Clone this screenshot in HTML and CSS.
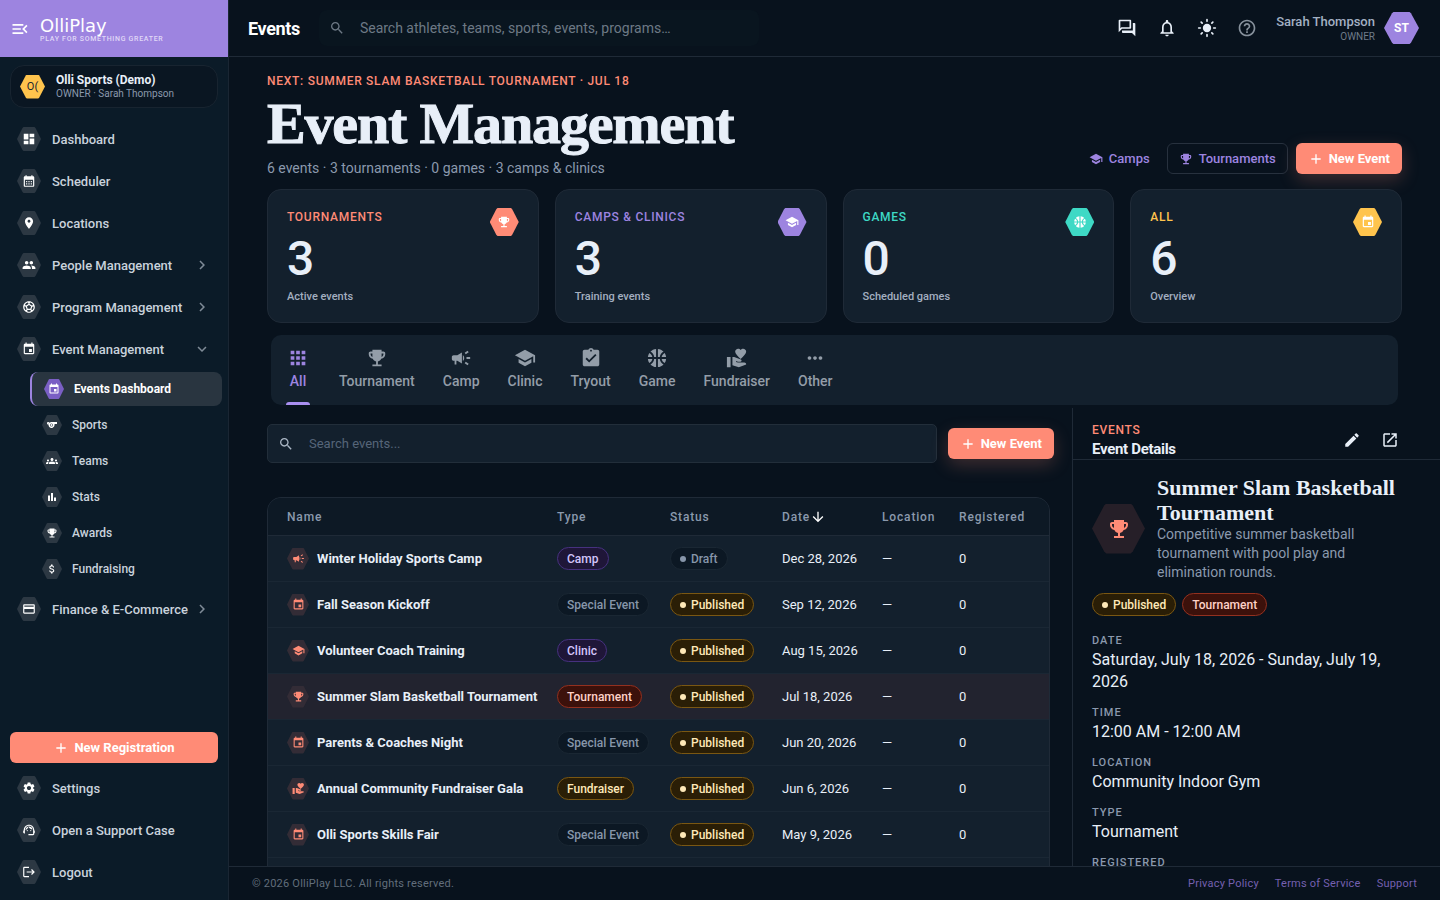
FILE: index.html
```html
<!DOCTYPE html>
<html lang="en">
<head>
  <meta charset="UTF-8" />
  <meta name="viewport" content="width=device-width, initial-scale=1.0"/>
  <title>Events - OlliPlay</title>
  <link rel="stylesheet" href="styles.css">
</head>
<body>
  <!-- Icon sprite -->
  <svg class="sprite" aria-hidden="true">
    <symbol id="menu-open" viewBox="0 0 24 24"><path d="M3 18h13v-2H3v2zm0-5h10v-2H3v2zm0-7v2h13V6H3zm18 9.59L17.42 12 21 8.41 19.59 7l-5 5 5 5L21 15.59z"/></symbol>
    <symbol id="dashboard" viewBox="0 0 24 24"><path d="M3 13h8V3H3v10zm0 8h8v-6H3v6zm10 0h8V11h-8v10zm0-18v6h8V3h-8z"/></symbol>
    <symbol id="calendar" viewBox="0 0 24 24"><path d="M19 4h-1V2h-2v2H8V2H6v2H5c-1.11 0-1.99.9-1.99 2L3 20c0 1.1.89 2 2 2h14c1.1 0 2-.9 2-2V6c0-1.1-.9-2-2-2zm0 16H5V10h14v10zM9 14H7v-2h2v2zm4 0h-2v-2h2v2zm4 0h-2v-2h2v2zm-8 4H7v-2h2v2zm4 0h-2v-2h2v2zm4 0h-2v-2h2v2z"/></symbol>
    <symbol id="pin" viewBox="0 0 24 24"><path d="M12 2C8.13 2 5 5.13 5 9c0 5.25 7 13 7 13s7-7.75 7-13c0-3.87-3.13-7-7-7zm0 9.5c-1.38 0-2.5-1.12-2.5-2.5s1.12-2.5 2.5-2.5 2.5 1.12 2.5 2.5-1.12 2.5-2.5 2.5z"/></symbol>
    <symbol id="people" viewBox="0 0 24 24"><path d="M16 11c1.66 0 2.99-1.34 2.99-3S17.66 5 16 5c-1.66 0-3 1.34-3 3s1.34 3 3 3zm-8 0c1.66 0 2.99-1.34 2.99-3S9.66 5 8 5C6.34 5 5 6.34 5 8s1.34 3 3 3zm0 2c-2.33 0-7 1.17-7 3.5V19h14v-2.5c0-2.33-4.67-3.5-7-3.5zm8 0c-.29 0-.62.02-.97.05 1.16.84 1.97 1.97 1.97 3.45V19h6v-2.5c0-2.33-4.67-3.5-7-3.5z"/></symbol>
    <symbol id="soccer" viewBox="0 0 24 24"><path d="M12 2C6.48 2 2 6.48 2 12s4.48 10 10 10 10-4.48 10-10S17.52 2 12 2zm1 3.3 1.35-.95c1.82.56 3.37 1.76 4.38 3.34l-.39 1.34-1.35.46L13 6.7V5.3zm-3.35-.95L11 5.3v1.4L7.01 9.49l-1.35-.46-.39-1.34c1.01-1.57 2.56-2.77 4.38-3.34zM7.08 17.11l-1.14.1C4.73 15.81 4 13.99 4 12c0-.12.01-.23.02-.35l1-.73 1.38.48 1.46 4.34-.78 1.37zm7.42 2.48c-.79.26-1.63.41-2.5.41s-1.71-.15-2.5-.41l-.69-1.49.64-1.1h5.11l.64 1.11-.7 1.48zM14.27 15H9.73l-1.35-4.02L12 8.44l3.63 2.54L14.27 15zm3.79 2.21-1.14-.1-.79-1.37 1.46-4.34 1.39-.47 1 .73c.01.11.02.22.02.34 0 1.99-.73 3.81-1.94 5.21z"/></symbol>
    <symbol id="event" viewBox="0 0 24 24"><path d="M17 12h-5v5h5v-5zM16 1v2H8V1H6v2H5c-1.11 0-1.99.9-1.99 2L3 19c0 1.1.89 2 2 2h14c1.1 0 2-.9 2-2V5c0-1.1-.9-2-2-2h-1V1h-2zm3 18H5V8h14v11z"/></symbol>
    <symbol id="whistle" viewBox="0 0 24 24"><path fill-rule="evenodd" d="M11.23 6c-1.66 0-3.22.66-4.36 1.73C6.54 6.73 5.61 6 4.5 6 3.12 6 2 7.12 2 8.5S3.12 11 4.5 11c.21 0 .41-.03.61-.08-.05.25-.09.51-.1.78-.18 3.68 2.95 6.68 6.68 6.27 2.55-.28 4.68-2.26 5.19-4.77.15-.71.15-1.4.06-2.06-.09-.6.38-1.13.99-1.13H22V6H11.23zM4.5 9a.5.5 0 1 1 0-1 .5.5 0 0 1 0 1zM11 15a3 3 0 1 1 0-6 3 3 0 0 1 0 6z"/><circle cx="11" cy="12" r="2"/></symbol>
    <symbol id="groups" viewBox="0 0 24 24"><path d="M12 12.75c1.63 0 3.07.39 4.24.9 1.08.48 1.76 1.56 1.76 2.73V18H6v-1.61c0-1.18.68-2.26 1.76-2.73 1.17-.52 2.61-.91 4.24-.91zM4 13c1.1 0 2-.9 2-2s-.9-2-2-2-2 .9-2 2 .9 2 2 2zm1.13 1.1c-.37-.06-.74-.1-1.13-.1-.99 0-1.93.21-2.78.58C.48 14.9 0 15.62 0 16.43V18h4.5v-1.61c0-.83.23-1.61.63-2.29zM20 13c1.1 0 2-.9 2-2s-.9-2-2-2-2 .9-2 2 .9 2 2 2zm4 3.43c0-.81-.48-1.53-1.22-1.85-.85-.37-1.79-.58-2.78-.58-.39 0-.76.04-1.13.1.4.68.63 1.46.63 2.29V18H24v-1.57zM12 6c1.66 0 3 1.34 3 3s-1.34 3-3 3-3-1.34-3-3 1.34-3 3-3z"/></symbol>
    <symbol id="bars" viewBox="0 0 24 24"><path d="M4 9h4v11H4zm12 4h4v7h-4zm-6-9h4v16h-4z"/></symbol>
    <symbol id="trophy" viewBox="0 0 24 24"><path d="M19 5h-2V3H7v2H5c-1.1 0-2 .9-2 2v1c0 2.55 1.92 4.63 4.39 4.94.63 1.5 1.98 2.63 3.61 2.96V19H7v2h10v-2h-4v-3.1c1.63-.33 2.98-1.46 3.61-2.96C19.08 12.63 21 10.55 21 8V7c0-1.1-.9-2-2-2zM5 8V7h2v3.82C5.84 10.4 5 9.3 5 8zm14 0c0 1.3-.84 2.4-2 2.82V7h2v1z"/></symbol>
    <symbol id="money" viewBox="0 0 24 24"><path d="M11.8 10.9c-2.27-.59-3-1.2-3-2.15 0-1.09 1.01-1.85 2.7-1.85 1.78 0 2.44.85 2.5 2.1h2.21c-.07-1.72-1.12-3.3-3.21-3.81V3h-3v2.16c-1.94.42-3.5 1.68-3.5 3.61 0 2.31 1.91 3.46 4.7 4.13 2.5.6 3 1.48 3 2.41 0 .69-.49 1.79-2.7 1.79-2.06 0-2.87-.92-2.98-2.1h-2.2c.12 2.19 1.76 3.42 3.68 3.83V21h3v-2.15c1.95-.37 3.5-1.5 3.5-3.55 0-2.84-2.43-3.81-4.7-4.4z"/></symbol>
    <symbol id="card" viewBox="0 0 24 24"><path d="M20 4H4c-1.11 0-1.99.89-1.99 2L2 18c0 1.11.89 2 2 2h16c1.11 0 2-.89 2-2V6c0-1.11-.89-2-2-2zm0 14H4v-6h16v6zm0-10H4V6h16v2z"/></symbol>
    <symbol id="settings" viewBox="0 0 24 24"><path d="M19.14 12.94c.04-.3.06-.61.06-.94 0-.32-.02-.64-.07-.94l2.03-1.58c.18-.14.23-.41.12-.61l-1.92-3.32c-.12-.22-.37-.29-.59-.22l-2.39.96c-.5-.38-1.03-.7-1.62-.94l-.36-2.54c-.04-.24-.24-.41-.48-.41h-3.84c-.24 0-.43.17-.47.41l-.36 2.54c-.59.24-1.13.57-1.62.94l-2.39-.96c-.22-.08-.47 0-.59.22L2.74 8.87c-.12.21-.08.47.12.61l2.03 1.58c-.05.3-.09.63-.09.94s.02.64.07.94l-2.03 1.58c-.18.14-.23.41-.12.61l1.92 3.32c.12.22.37.29.59.22l2.39-.96c.5.38 1.03.7 1.62.94l.36 2.54c.05.24.24.41.48.41h3.84c.24 0 .44-.17.47-.41l.36-2.54c.59-.24 1.13-.56 1.62-.94l2.39.96c.22.08.47 0 .59-.22l1.92-3.32c.12-.22.07-.47-.12-.61l-2.01-1.58zM12 15.6c-1.98 0-3.6-1.62-3.6-3.6s1.62-3.6 3.6-3.6 3.6 1.62 3.6 3.6-1.62 3.6-3.6 3.6z"/></symbol>
    <symbol id="support" viewBox="0 0 24 24"><path d="M21 12.22C21 6.73 16.74 3 12 3c-4.69 0-9 3.65-9 9.28-.6.34-1 .98-1 1.72v2c0 1.1.9 2 2 2h1v-6.1c0-3.87 3.13-7 7-7s7 3.13 7 7V19h-8v2h8c1.1 0 2-.9 2-2v-1.22c.59-.31 1-.92 1-1.64v-2.3c0-.7-.41-1.31-1-1.62z"/><circle cx="9" cy="13" r="1"/><circle cx="15" cy="13" r="1"/><path d="M18 11.03C17.52 8.18 15.04 6 12.05 6c-3.03 0-6.29 2.51-6.03 6.45 2.47-1.01 4.33-3.21 4.86-5.89 1.31 2.63 4 4.44 7.12 4.47z"/></symbol>
    <symbol id="logout" viewBox="0 0 24 24"><path d="m17 7-1.41 1.41L18.17 11H8v2h10.17l-2.58 2.58L17 17l5-5zM4 5h8V3H4c-1.1 0-2 .9-2 2v14c0 1.1.9 2 2 2h8v-2H4V5z"/></symbol>
    <symbol id="search" viewBox="0 0 24 24"><path d="M15.5 14h-.79l-.28-.27C15.41 12.59 16 11.11 16 9.5 16 5.91 13.09 3 9.5 3S3 5.91 3 9.5 5.91 16 9.5 16c1.61 0 3.09-.59 4.23-1.57l.27.28v.79l5 4.99L20.49 19l-4.99-5zm-6 0C7.01 14 5 11.99 5 9.5S7.01 5 9.5 5 14 7.01 14 9.5 11.99 14 9.5 14z"/></symbol>
    <symbol id="forum" viewBox="0 0 24 24"><path d="M15 4v7H5.17L4 12.17V4h11m1-2H3c-.55 0-1 .45-1 1v14l4-4h10c.55 0 1-.45 1-1V3c0-.55-.45-1-1-1zm5 4h-2v9H6v2c0 .55.45 1 1 1h11l4 4V7c0-.55-.45-1-1-1z"/></symbol>
    <symbol id="bell" viewBox="0 0 24 24"><path d="M12 22c1.1 0 2-.9 2-2h-4c0 1.1.9 2 2 2zm6-6v-5c0-3.07-1.63-5.64-4.5-6.32V4c0-.83-.67-1.5-1.5-1.5s-1.5.67-1.5 1.5v.68C7.64 5.36 6 7.92 6 11v5l-2 2v1h16v-1l-2-2zm-2 1H8v-6c0-2.48 1.51-4.5 4-4.5s4 2.02 4 4.5v6z"/></symbol>
    <symbol id="sun" viewBox="0 0 24 24"><circle cx="12" cy="12" r="5"/><path fill="none" stroke="currentColor" stroke-width="2" stroke-linecap="round" d="M12 2v2M12 20v2M2 12h2M20 12h2M5 5l1.2 1.2M17.8 17.8 19 19M5 19l1.2-1.2M17.8 6.2 19 5"/></symbol>
    <symbol id="help" viewBox="0 0 24 24"><path d="M11 18h2v-2h-2v2zm1-16C6.48 2 2 6.48 2 12s4.48 10 10 10 10-4.48 10-10S17.52 2 12 2zm0 18c-4.41 0-8-3.59-8-8s3.59-8 8-8 8 3.59 8 8-3.59 8-8 8zm0-14c-2.21 0-4 1.79-4 4h2c0-1.1.9-2 2-2s2 .9 2 2c0 2-3 1.75-3 5h2c0-2.25 3-2.5 3-5 0-2.21-1.79-4-4-4z"/></symbol>
    <symbol id="school" viewBox="0 0 24 24"><path d="M5 13.18v4L12 21l7-3.82v-4L12 17l-7-3.82zM12 3 1 9l11 6 9-4.91V17h2V9L12 3z"/></symbol>
    <symbol id="plus" viewBox="0 0 24 24"><path d="M19 13h-6v6h-2v-6H5v-2h6V5h2v6h6v2z"/></symbol>
    <symbol id="apps" viewBox="0 0 24 24"><path d="M4 8h4V4H4v4zm6 12h4v-4h-4v4zm-6 0h4v-4H4v4zm0-6h4v-4H4v4zm6 0h4v-4h-4v4zm6-10v4h4V4h-4zm-6 4h4V4h-4v4zm6 6h4v-4h-4v4zm0 6h4v-4h-4v4z"/></symbol>
    <symbol id="campaign" viewBox="0 0 24 24"><path d="M18 11v2h4v-2h-4zm-2 6.61c.96.71 2.21 1.65 3.2 2.39.4-.53.8-1.07 1.2-1.6-.99-.74-2.24-1.68-3.2-2.4-.4.54-.8 1.08-1.2 1.61zM20.4 5.6c-.4-.53-.8-1.07-1.2-1.6-.99.74-2.24 1.68-3.2 2.4.4.53.8 1.07 1.2 1.6.96-.72 2.21-1.65 3.2-2.4zM4 9c-1.1 0-2 .9-2 2v2c0 1.1.9 2 2 2h1v4h2v-4h1l5 3V6L8 9H4zm11.5 3c0-1.33-.58-2.53-1.5-3.35v6.69c.92-.81 1.5-2.01 1.5-3.34z"/></symbol>
    <symbol id="tryout" viewBox="0 0 24 24"><path d="M19 3h-4.18C14.4 1.84 13.3 1 12 1c-1.3 0-2.4.84-2.82 2H5c-1.1 0-2 .9-2 2v14c0 1.1.9 2 2 2h14c1.1 0 2-.9 2-2V5c0-1.1-.9-2-2-2zm-7 0c.55 0 1 .45 1 1s-.45 1-1 1-1-.45-1-1 .45-1 1-1zm-2 14-4-4 1.41-1.41L10 14.17l6.59-6.59L18 9l-8 8z"/></symbol>
    <symbol id="basketball" viewBox="0 0 24 24"><path d="M17.09 11h4.86c-.16-1.61-.71-3.11-1.54-4.4-1.73.83-2.99 2.45-3.32 4.4zM6.91 11c-.33-1.95-1.59-3.57-3.32-4.4-.83 1.29-1.38 2.79-1.54 4.4h4.86zm8.16 0c.32-2.59 1.88-4.79 4.06-6-1.6-1.63-3.74-2.71-6.13-2.95V11h2.07zM11 11V2.05C8.61 2.29 6.46 3.37 4.87 5c2.18 1.21 3.74 3.41 4.06 6H11zm-2.07 2c-.32 2.59-1.88 4.79-4.06 6 1.6 1.63 3.74 2.71 6.13 2.95V13H8.93zM15.07 13H13v8.95c2.39-.24 4.54-1.32 6.13-2.95-2.18-1.21-3.74-3.41-4.06-6zM3.59 17.4c1.73-.83 2.99-2.45 3.32-4.4H2.05c.16 1.61.71 3.11 1.54 4.4zm13.5-4.4c.33 1.95 1.59 3.57 3.32 4.4.83-1.29 1.38-2.79 1.54-4.4h-4.86z"/></symbol>
    <symbol id="giving" viewBox="0 0 24 24"><path d="M1 11h4v11H1zm15-7.75C16.65 2.49 17.66 2 18.7 2 20.55 2 22 3.45 22 5.3c0 2.27-2.91 4.9-6 7.7-3.09-2.81-6-5.44-6-7.7C10 3.45 11.45 2 13.3 2c1.04 0 2.05.49 2.7 1.25zM20 17h-7l-2.09-.73.33-.94L13 16h2.82c.65 0 1.18-.53 1.18-1.18 0-.49-.31-.93-.77-1.11L8.97 11H7v9.02L14 22l8.01-3c-.01-1.1-.9-2-2.01-2z"/></symbol>
    <symbol id="more" viewBox="0 0 24 24"><path d="M6 10c-1.1 0-2 .9-2 2s.9 2 2 2 2-.9 2-2-.9-2-2-2zm12 0c-1.1 0-2 .9-2 2s.9 2 2 2 2-.9 2-2-.9-2-2-2zm-6 0c-1.1 0-2 .9-2 2s.9 2 2 2 2-.9 2-2-.9-2-2-2z"/></symbol>
    <symbol id="edit" viewBox="0 0 24 24"><path d="M3 17.25V21h3.75L17.81 9.94l-3.75-3.75L3 17.25zM20.71 7.04c.39-.39.39-1.02 0-1.41l-2.34-2.34c-.39-.39-1.02-.39-1.41 0l-1.83 1.83 3.75 3.75 1.83-1.83z"/></symbol>
    <symbol id="open" viewBox="0 0 24 24"><path d="M19 19H5V5h7V3H5c-1.11 0-2 .9-2 2v14c0 1.1.89 2 2 2h14c1.1 0 2-.9 2-2v-7h-2v7zM14 3v2h3.59l-9.83 9.83 1.41 1.41L19 6.41V10h2V3h-7z"/></symbol>
    <symbol id="arrow-down" viewBox="0 0 24 24"><path d="m20 12-1.41-1.41L13 16.17V4h-2v12.17l-5.58-5.59L4 12l8 8 8-8z"/></symbol>
    <symbol id="chevron-right" viewBox="0 0 24 24"><path d="M10 6 8.59 7.41 13.17 12l-4.58 4.59L10 18l6-6z"/></symbol>
    <symbol id="chevron-down" viewBox="0 0 24 24"><path d="M16.59 8.59 12 13.17 7.41 8.59 6 10l6 6 6-6z"/></symbol>
  </svg>

  <div class="app">
    <aside class="sidebar">
      <div class="brand">
        <button class="icon-btn" aria-label="Collapse menu"><svg><use href="#menu-open"/></svg></button>
        <div>
          <div class="brand-name">OlliPlay</div>
          <div class="brand-tag">PLAY FOR SOMETHING GREATER</div>
        </div>
      </div>

      <button class="org">
        <span class="hex org-hex">O(</span>
        <span class="org-text">
          <strong>Olli Sports (Demo)</strong>
          <small>OWNER · Sarah Thompson</small>
        </span>
      </button>

      <nav class="nav">
        <a href="#"><span class="hex"><svg><use href="#dashboard"/></svg></span>Dashboard</a>
        <a href="#"><span class="hex"><svg><use href="#calendar"/></svg></span>Scheduler</a>
        <a href="#"><span class="hex"><svg><use href="#pin"/></svg></span>Locations</a>
        <a href="#"><span class="hex"><svg><use href="#people"/></svg></span>People Management<svg class="chevron"><use href="#chevron-right"/></svg></a>
        <a href="#"><span class="hex"><svg><use href="#soccer"/></svg></span>Program Management<svg class="chevron"><use href="#chevron-right"/></svg></a>
        <a href="#"><span class="hex"><svg><use href="#event"/></svg></span>Event Management<svg class="chevron"><use href="#chevron-down"/></svg></a>
        <div class="subnav">
          <a href="#" class="active"><span class="hex"><svg><use href="#event"/></svg></span>Events Dashboard</a>
          <a href="#"><span class="hex"><svg><use href="#whistle"/></svg></span>Sports</a>
          <a href="#"><span class="hex"><svg><use href="#groups"/></svg></span>Teams</a>
          <a href="#"><span class="hex"><svg><use href="#bars"/></svg></span>Stats</a>
          <a href="#"><span class="hex"><svg><use href="#trophy"/></svg></span>Awards</a>
          <a href="#"><span class="hex"><svg><use href="#money"/></svg></span>Fundraising</a>
        </div>
        <a href="#"><span class="hex"><svg><use href="#card"/></svg></span>Finance &amp; E-Commerce<svg class="chevron"><use href="#chevron-right"/></svg></a>
      </nav>

      <div class="sidebar-bottom">
        <button class="btn btn-primary"><svg><use href="#plus"/></svg>New Registration</button>
        <div class="nav">
          <a href="#"><span class="hex"><svg><use href="#settings"/></svg></span>Settings</a>
          <a href="#"><span class="hex"><svg><use href="#support"/></svg></span>Open a Support Case</a>
          <a href="#"><span class="hex"><svg><use href="#logout"/></svg></span>Logout</a>
        </div>
      </div>
    </aside>

    <div class="page">
      <header class="topbar">
        <h2>Events</h2>
        <label class="global-search">
          <svg><use href="#search"/></svg>
          <input type="text" aria-label="Search" placeholder="Search athletes, teams, sports, events, programs…">
        </label>
        <div class="topbar-actions">
          <button class="icon-btn" aria-label="Messages"><svg><use href="#forum"/></svg></button>
          <button class="icon-btn" aria-label="Notifications"><svg><use href="#bell"/></svg></button>
          <button class="icon-btn" aria-label="Light mode"><svg><use href="#sun"/></svg></button>
          <button class="icon-btn muted" aria-label="Help"><svg><use href="#help"/></svg></button>
        </div>
        <div class="user">
          <div class="user-text">
            <div class="user-name">Sarah Thompson</div>
            <div class="user-role">OWNER</div>
          </div>
          <div class="hex user-hex">ST</div>
        </div>
      </header>

      <main class="main">
        <section class="hero">
          <div>
            <p class="eyebrow">NEXT: SUMMER SLAM BASKETBALL TOURNAMENT · JUL 18</p>
            <h1>Event Management</h1>
            <p class="summary">6 events · 3 tournaments · 0 games · 3 camps &amp; clinics</p>
          </div>
          <div class="hero-actions">
            <button class="btn btn-text"><svg><use href="#school"/></svg>Camps</button>
            <button class="btn btn-outline"><svg><use href="#trophy"/></svg>Tournaments</button>
            <button class="btn btn-primary glow"><svg><use href="#plus"/></svg>New Event</button>
          </div>
        </section>

        <section class="stats">
          <article class="stat coral">
            <div class="stat-top"><h3>TOURNAMENTS</h3><span class="hex"><svg><use href="#trophy"/></svg></span></div>
            <div class="stat-value">3</div>
            <p>Active events</p>
          </article>
          <article class="stat purple">
            <div class="stat-top"><h3>CAMPS &amp; CLINICS</h3><span class="hex"><svg><use href="#school"/></svg></span></div>
            <div class="stat-value">3</div>
            <p>Training events</p>
          </article>
          <article class="stat teal">
            <div class="stat-top"><h3>GAMES</h3><span class="hex"><svg><use href="#basketball"/></svg></span></div>
            <div class="stat-value">0</div>
            <p>Scheduled games</p>
          </article>
          <article class="stat amber">
            <div class="stat-top"><h3>ALL</h3><span class="hex"><svg><use href="#event"/></svg></span></div>
            <div class="stat-value">6</div>
            <p>Overview</p>
          </article>
        </section>

        <div class="tabs">
          <button class="tab active"><svg><use href="#apps"/></svg>All</button>
          <button class="tab"><svg><use href="#trophy"/></svg>Tournament</button>
          <button class="tab"><svg><use href="#campaign"/></svg>Camp</button>
          <button class="tab"><svg><use href="#school"/></svg>Clinic</button>
          <button class="tab"><svg><use href="#tryout"/></svg>Tryout</button>
          <button class="tab"><svg><use href="#basketball"/></svg>Game</button>
          <button class="tab"><svg><use href="#giving"/></svg>Fundraiser</button>
          <button class="tab"><svg><use href="#more"/></svg>Other</button>
        </div>

        <div class="split">
          <section class="list">
            <div class="toolbar">
              <label class="list-search">
                <svg><use href="#search"/></svg>
                <input type="text" aria-label="Search events" placeholder="Search events...">
              </label>
              <button class="btn btn-primary glow"><svg><use href="#plus"/></svg>New Event</button>
            </div>

            <div class="table-wrap">
              <table>
                <thead>
                  <tr>
                    <th class="col-name">Name</th>
                    <th class="col-type">Type</th>
                    <th class="col-status">Status</th>
                    <th class="col-date"><span class="sorted">Date<svg><use href="#arrow-down"/></svg></span></th>
                    <th class="col-location">Location</th>
                    <th class="col-registered">Registered</th>
                  </tr>
                </thead>
                <tbody>
                  <tr>
                    <td><span class="event-name"><span class="hex"><svg><use href="#campaign"/></svg></span>Winter Holiday Sports Camp</span></td>
                    <td><span class="chip violet">Camp</span></td>
                    <td><span class="chip dot">Draft</span></td>
                    <td>Dec 28, 2026</td><td>—</td><td>0</td>
                  </tr>
                  <tr>
                    <td><span class="event-name"><span class="hex"><svg><use href="#event"/></svg></span>Fall Season Kickoff</span></td>
                    <td><span class="chip">Special Event</span></td>
                    <td><span class="chip gold dot">Published</span></td>
                    <td>Sep 12, 2026</td><td>—</td><td>0</td>
                  </tr>
                  <tr>
                    <td><span class="event-name"><span class="hex"><svg><use href="#school"/></svg></span>Volunteer Coach Training</span></td>
                    <td><span class="chip violet">Clinic</span></td>
                    <td><span class="chip gold dot">Published</span></td>
                    <td>Aug 15, 2026</td><td>—</td><td>0</td>
                  </tr>
                  <tr class="selected">
                    <td><span class="event-name"><span class="hex"><svg><use href="#trophy"/></svg></span>Summer Slam Basketball Tournament</span></td>
                    <td><span class="chip red">Tournament</span></td>
                    <td><span class="chip gold dot">Published</span></td>
                    <td>Jul 18, 2026</td><td>—</td><td>0</td>
                  </tr>
                  <tr>
                    <td><span class="event-name"><span class="hex"><svg><use href="#event"/></svg></span>Parents &amp; Coaches Night</span></td>
                    <td><span class="chip">Special Event</span></td>
                    <td><span class="chip gold dot">Published</span></td>
                    <td>Jun 20, 2026</td><td>—</td><td>0</td>
                  </tr>
                  <tr>
                    <td><span class="event-name"><span class="hex"><svg><use href="#giving"/></svg></span>Annual Community Fundraiser Gala</span></td>
                    <td><span class="chip gold">Fundraiser</span></td>
                    <td><span class="chip gold dot">Published</span></td>
                    <td>Jun 6, 2026</td><td>—</td><td>0</td>
                  </tr>
                  <tr>
                    <td><span class="event-name"><span class="hex"><svg><use href="#event"/></svg></span>Olli Sports Skills Fair</span></td>
                    <td><span class="chip">Special Event</span></td>
                    <td><span class="chip gold dot">Published</span></td>
                    <td>May 9, 2026</td><td>—</td><td>0</td>
                  </tr>
                </tbody>
              </table>
            </div>
          </section>

          <aside class="details">
            <div class="details-head">
              <div>
                <p class="eyebrow">EVENTS</p>
                <h3>Event Details</h3>
              </div>
              <div class="details-actions">
                <button class="icon-btn" aria-label="Edit"><svg><use href="#edit"/></svg></button>
                <button class="icon-btn" aria-label="Open"><svg><use href="#open"/></svg></button>
              </div>
            </div>
            <div class="details-body">
              <div class="details-intro">
                <span class="hex"><svg><use href="#trophy"/></svg></span>
                <div>
                  <h2>Summer Slam Basketball Tournament</h2>
                  <p>Competitive summer basketball tournament with pool play and elimination rounds.</p>
                </div>
              </div>
              <div class="chips">
                <span class="chip gold dot">Published</span>
                <span class="chip red">Tournament</span>
              </div>
              <dl>
                <dt>DATE</dt>
                <dd>Saturday, July 18, 2026 - Sunday, July 19, 2026</dd>
                <dt>TIME</dt>
                <dd>12:00 AM - 12:00 AM</dd>
                <dt>LOCATION</dt>
                <dd>Community Indoor Gym</dd>
                <dt>TYPE</dt>
                <dd>Tournament</dd>
                <dt>REGISTERED</dt>
              </dl>
            </div>
          </aside>
        </div>
      </main>

      <footer class="footer">
        <span>© 2026 OlliPlay LLC. All rights reserved.</span>
        <nav>
          <a href="#">Privacy Policy</a>
          <a href="#">Terms of Service</a>
          <a href="#">Support</a>
        </nav>
      </footer>
    </div>
  </div>
</body>
</html>
```
FILE: styles.css
```css
* {
  margin: 0;
  padding: 0;
  box-sizing: border-box;
}

:root {
  --bg: #08121d;
  --panel: #13202d;
  --sidebar: #0b1b28;
  --line: #1f2a37;
  --text: #e8eff8;
  --muted: #8b99ad;
  --coral: #ff8b76;
  --purple: #9d84e0;
  --teal: #3ed9c5;
  --amber: #ffc44d;
}

body {
  background: var(--bg);
  color: var(--text);
  font-family: Roboto, sans-serif;
  font-size: 13px;
}

svg {
  display: block;
  flex: none;
  fill: currentColor;
}

.sprite {
  display: none;
}

a {
  color: inherit;
  text-decoration: none;
}

button {
  font-family: inherit;
  color: inherit;
  background: none;
  border: none;
  cursor: pointer;
}

input {
  flex: 1;
  min-width: 0;
  font-family: inherit;
  color: var(--text);
  background: none;
  border: none;
  outline: none;
}

.app {
  display: flex;
  height: 100vh;
}

.hex {
  display: flex;
  flex: none;
  align-items: center;
  justify-content: center;
  clip-path: polygon(27% 0, 73% 0, 77% 4%, 100% 50%, 77% 96%, 73% 100%, 27% 100%, 23% 96%, 0 50%, 23% 4%);
}

.icon-btn {
  display: flex;
  align-items: center;
  justify-content: center;
}

/* Sidebar */
.sidebar {
  display: flex;
  flex: none;
  flex-direction: column;
  width: 229px;
  background: var(--sidebar);
  border-right: 1px solid #1a2633;
}

.brand {
  display: flex;
  align-items: center;
  gap: 10px;
  height: 57px;
  padding-left: 10px;
  background: var(--purple);
  color: #fff;
}

.brand svg {
  width: 20px;
  height: 20px;
}

.brand-name {
  padding-top: 3px;
  font-family: "DejaVu Sans", sans-serif;
  font-size: 18px;
  line-height: 18px;
}

.brand-tag {
  font-size: 7px;
  font-weight: 500;
  line-height: 9px;
  letter-spacing: 0.1em;
  color: #e0d8f7;
}

.org {
  display: flex;
  align-items: center;
  gap: 11px;
  margin: 8px 10px 10px;
  padding: 7px 9px;
  background: #0a1622;
  border: 1px solid #182430;
  border-radius: 14px;
  text-align: left;
}

.org-hex {
  width: 25px;
  height: 24px;
  background: var(--amber);
  color: #1c2430;
  font-size: 11px;
}

.org-text strong,
.org-text small {
  display: block;
}

.org-text strong {
  font-size: 12px;
  line-height: 14px;
}

.org-text small {
  font-size: 10px;
  line-height: 13px;
  color: var(--muted);
}

.nav a {
  display: flex;
  align-items: center;
  height: 42px;
  padding: 0 17px;
  font-size: 13px;
  font-weight: 500;
  white-space: nowrap;
  color: #c9d2dc;
}

.nav .hex {
  width: 24px;
  height: 24px;
  margin-right: 11px;
  background: #2c3843;
  color: #fff;
}

.nav .hex svg {
  width: 14px;
  height: 14px;
}

.nav .chevron {
  width: 18px;
  height: 18px;
  margin-left: auto;
  color: #7f8b97;
}

.subnav {
  display: flex;
  flex-direction: column;
  gap: 2px;
  padding: 2px 6px 2px 30px;
}

.nav .subnav a {
  height: 34px;
  padding: 0 12px;
  font-size: 12px;
}

.nav .subnav a.active {
  background: #293540;
  border-left: 2px solid var(--purple);
  border-radius: 8px;
  color: #fff;
  font-weight: 700;
}

.nav .subnav .hex {
  width: 20px;
  height: 20px;
  margin-right: 10px;
}

.subnav .hex svg {
  width: 12px;
  height: 12px;
}

.nav .subnav .active .hex {
  background: #7a5fc4;
}

.sidebar-bottom {
  margin-top: auto;
  padding-bottom: 7px;
}

.sidebar-bottom .btn {
  width: 208px;
  margin: 0 10px 4px;
}

/* Buttons */
.btn {
  display: flex;
  flex: none;
  align-items: center;
  justify-content: center;
  gap: 6px;
  height: 31px;
  border-radius: 6px;
  font-size: 13px;
  font-weight: 500;
}

.btn svg {
  width: 14px;
  height: 14px;
}

.btn-primary {
  gap: 5px;
  padding: 0 12px;
  background: var(--coral);
  color: #fff;
  font-weight: 700;
}

.btn-primary svg {
  width: 16px;
  height: 16px;
}

.btn-text,
.btn-outline {
  color: var(--purple);
}

.btn-text {
  padding: 0 17px;
}

.btn-outline {
  padding: 0 11px;
  margin-right: 8px;
  border: 1px solid #27313e;
}

.glow {
  box-shadow: 0 6px 18px rgba(255, 139, 118, 0.22);
}

/* Top bar */
.page {
  display: flex;
  flex: 1;
  flex-direction: column;
  min-width: 0;
}

.topbar {
  display: flex;
  flex: none;
  align-items: center;
  height: 57px;
  padding: 0 21px 0 19px;
  border-bottom: 1px solid var(--line);
}

.topbar h2 {
  font-size: 18px;
  font-weight: 700;
  letter-spacing: -0.02em;
  color: #fff;
}

.global-search {
  display: flex;
  align-items: center;
  gap: 15px;
  width: 440px;
  height: 36px;
  margin-left: 19px;
  padding: 0 10px;
  background: #09151f;
  border-radius: 8px;
  color: #6d7985;
}

.global-search svg {
  width: 16px;
  height: 16px;
}

.global-search input {
  font-size: 14px;
}

.global-search input::placeholder {
  color: #6d7985;
}

.topbar-actions {
  display: flex;
  gap: 20px;
  margin-left: auto;
}

.topbar-actions svg {
  width: 20px;
  height: 20px;
}

.topbar-actions .muted {
  color: #87919c;
}

.user {
  display: flex;
  align-items: center;
  gap: 9px;
  margin-left: 19px;
}

.user-text {
  text-align: right;
}

.user-name {
  font-weight: 500;
  line-height: 17px;
  color: #a3b0c3;
}

.user-role {
  font-size: 10px;
  line-height: 14px;
  color: #6f7b89;
}

.user-hex {
  width: 35px;
  height: 32px;
  background: var(--purple);
  color: #fff;
  font-size: 12px;
  font-weight: 700;
}

/* Main content */
.main {
  display: flex;
  flex: 1;
  flex-direction: column;
  min-height: 0;
  padding: 15px 38px 0;
  overflow: hidden;
}

.hero {
  display: flex;
  align-items: flex-end;
  justify-content: space-between;
}

.eyebrow {
  font-size: 12px;
  font-weight: 500;
  line-height: 18px;
  letter-spacing: 0.06em;
  color: var(--coral);
}

.hero h1 {
  font-family: "Liberation Serif", serif;
  font-size: 58px;
  font-weight: 700;
  line-height: 68px;
  letter-spacing: -0.02em;
  -webkit-text-stroke: 1px currentColor;
}

.summary {
  font-size: 14px;
  line-height: 20px;
  color: var(--muted);
}

.hero-actions {
  display: flex;
  align-items: center;
  padding-bottom: 4px;
}

.stats {
  display: grid;
  grid-template-columns: repeat(4, 1fr);
  gap: 16px;
  margin-top: 11px;
}

.stat {
  height: 134px;
  padding: 18px 19px;
  background: var(--panel);
  border: 1px solid var(--line);
  border-radius: 14px;
}

.stat-top {
  display: flex;
  justify-content: space-between;
  height: 28px;
}

.stat h3 {
  font-size: 12px;
  font-weight: 500;
  line-height: 18px;
  letter-spacing: 0.06em;
}

.stat .hex {
  width: 29px;
  height: 28px;
}

.stat .hex svg {
  width: 14px;
  height: 14px;
  color: #fff;
}

.stat-value {
  font-size: 48px;
  font-weight: 500;
  line-height: 46px;
}

.stat p {
  margin-top: 8px;
  font-size: 11px;
  font-weight: 500;
  line-height: 14px;
  color: #a3afc0;
}

.coral h3 { color: var(--coral); }
.purple h3 { color: var(--purple); }
.teal h3 { color: var(--teal); }
.amber h3 { color: var(--amber); }
.coral .hex { background: var(--coral); }
.purple .hex { background: var(--purple); }
.teal .hex { background: var(--teal); }
.amber .hex { background: var(--amber); }

/* Tabs */
.tabs {
  display: flex;
  flex: none;
  height: 70px;
  margin: 12px 4px 0;
  background: var(--panel);
  border-radius: 10px;
}

.tab {
  position: relative;
  display: flex;
  flex-direction: column;
  align-items: center;
  gap: 2px;
  min-width: 54px;
  padding: 12px 14px 0;
  font-size: 14px;
  font-weight: 500;
  line-height: 20px;
  color: #939da8;
}

.tab svg {
  width: 22px;
  height: 22px;
}

.tab.active {
  color: var(--purple);
}

.tab.active::after {
  content: "";
  position: absolute;
  right: 15px;
  bottom: 0;
  left: 15px;
  height: 3px;
  background: #a98ff0;
  border-radius: 3px 3px 0 0;
}

/* List */
.split {
  display: flex;
  flex: 1;
  min-height: 0;
  margin: 3px -38px 0 0;
}

.list {
  flex: 1;
  min-width: 0;
  padding: 16px 18px 0 0;
}

.toolbar {
  display: flex;
  align-items: center;
  gap: 11px;
}

.list-search {
  display: flex;
  flex: 1;
  align-items: center;
  gap: 15px;
  height: 39px;
  padding: 0 10px;
  background: var(--panel);
  border: 1px solid #222e3a;
  border-radius: 5px;
  color: #aab6c4;
}

.list-search svg {
  width: 16px;
  height: 16px;
}

.list-search input {
  font-size: 13px;
}

.list-search input::placeholder {
  color: #566579;
}

.table-wrap {
  height: 480px;
  margin: 34px 4px 0 0;
  overflow: hidden;
  background: var(--panel);
  border: 1px solid var(--line);
  border-radius: 14px;
}

table {
  width: 100%;
  table-layout: fixed;
  border-collapse: separate;
  border-spacing: 0;
}

th {
  height: 38px;
  padding: 0 10px;
  background: #0d1925;
  border-bottom: 1px solid var(--line);
  font-size: 12px;
  font-weight: 500;
  letter-spacing: 0.07em;
  text-align: left;
  color: var(--muted);
}

td {
  height: 46px;
  padding: 0 10px;
  border-bottom: 1px solid #1a2734;
  font-size: 13px;
  white-space: nowrap;
}

th:first-child,
td:first-child {
  padding-left: 19px;
}

.col-type { width: 113px; }
.col-status { width: 112px; }
.col-date { width: 100px; }
.col-location { width: 77px; }
.col-registered { width: 100px; }

.sorted {
  display: flex;
  align-items: center;
}

.sorted svg {
  width: 16px;
  height: 16px;
  color: #fff;
}

.selected td {
  background: #22232f;
}

.event-name {
  display: flex;
  align-items: center;
  gap: 8px;
  font-weight: 700;
}

.event-name .hex {
  width: 22px;
  height: 22px;
  background: #332c36;
  color: var(--coral);
}

.event-name svg {
  width: 13px;
  height: 13px;
}

.chip {
  display: inline-flex;
  align-items: center;
  gap: 5px;
  height: 23px;
  padding: 0 9px;
  background: #0c1824;
  border: 1px solid #1a2733;
  border-radius: 12px;
  font-size: 12px;
  font-weight: 500;
  color: #8796aa;
}

.chip.dot::before {
  content: "";
  width: 6px;
  height: 6px;
  background: currentColor;
  border-radius: 50%;
}

.chip.violet {
  background: #1f1638;
  border-color: #46317f;
  color: #d3c5fb;
}

.chip.gold {
  background: #2a1e06;
  border-color: #7a5712;
  color: #ffe9b8;
}

.chip.red {
  background: #3c110b;
  border-color: #93301f;
  color: #ffd2c8;
}

/* Details panel */
.details {
  flex: none;
  width: 368px;
  overflow: hidden;
  border-left: 1px solid var(--line);
}

.details-head {
  display: flex;
  align-items: center;
  justify-content: space-between;
  height: 52px;
  padding: 12px 41px 0 19px;
  border-bottom: 1px solid var(--line);
}

.details-head h3 {
  font-size: 15px;
  font-weight: 700;
  line-height: 20px;
  letter-spacing: -0.02em;
}

.details-actions {
  display: flex;
  gap: 20px;
}

.details-actions svg {
  width: 18px;
  height: 18px;
}

.details-body {
  padding: 15px 40px 0 19px;
}

.details-intro {
  display: flex;
  align-items: center;
  gap: 12px;
}

.details-intro .hex {
  width: 53px;
  height: 50px;
  background: #261f28;
  color: var(--coral);
}

.details-intro .hex svg {
  width: 24px;
  height: 24px;
}

.details-intro h2 {
  font-family: "Liberation Serif", serif;
  font-size: 22px;
  font-weight: 700;
  line-height: 25px;
}

.details-intro p {
  font-size: 14px;
  line-height: 19px;
  color: var(--muted);
}

.chips {
  display: flex;
  gap: 6px;
  margin-top: 11px;
}

.details dl {
  margin-top: 17px;
}

.details dt {
  font-size: 11px;
  font-weight: 500;
  line-height: 16px;
  letter-spacing: 1px;
  color: var(--muted);
}

.details dd {
  margin-bottom: 12px;
  font-size: 16px;
  line-height: 22px;
}

/* Footer */
.footer {
  display: flex;
  flex: none;
  align-items: center;
  justify-content: space-between;
  height: 34px;
  padding: 0 23px;
  border-top: 1px solid var(--line);
  font-size: 11px;
  letter-spacing: 0.02em;
  color: #626e7c;
}

.footer nav {
  display: flex;
  gap: 16px;
  color: #7560b0;
}
```
